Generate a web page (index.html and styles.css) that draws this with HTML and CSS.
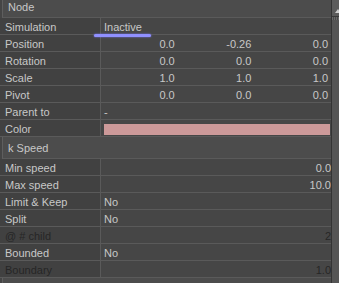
FILE: index.html
```html
<!DOCTYPE html>
<html lang="en">
<head>
  <meta charset="UTF-8">
  <title>Properties</title>
  <link rel="stylesheet" href="styles.css">
</head>
<body>
  <div class="panel">
    <div class="props">
      <div class="section first">Node</div>

      <div class="row"><div class="label">Simulation</div><div class="value">Inactive</div></div>
      <div class="row"><div class="label">Position</div><div class="value vec"><span>0.0</span><span>-0.26</span><span>0.0</span></div></div>
      <div class="row"><div class="label">Rotation</div><div class="value vec"><span>0.0</span><span>0.0</span><span>0.0</span></div></div>
      <div class="row"><div class="label">Scale</div><div class="value vec"><span>1.0</span><span>1.0</span><span>1.0</span></div></div>
      <div class="row"><div class="label">Pivot</div><div class="value vec"><span>0.0</span><span>0.0</span><span>0.0</span></div></div>
      <div class="row"><div class="label">Parent to</div><div class="value">-</div></div>
      <div class="row"><div class="label">Color</div><div class="value"><div class="swatch"></div></div></div>

      <div class="section">k Speed</div>

      <div class="row"><div class="label">Min speed</div><div class="value num">0.0</div></div>
      <div class="row"><div class="label">Max speed</div><div class="value num">10.0</div></div>
      <div class="row"><div class="label">Limit &amp; Keep</div><div class="value">No</div></div>
      <div class="row"><div class="label">Split</div><div class="value">No</div></div>
      <div class="row disabled"><div class="label">@ # child</div><div class="value num">2</div></div>
      <div class="row"><div class="label">Bounded</div><div class="value">No</div></div>
      <div class="row disabled"><div class="label">Boundary</div><div class="value num">1.0</div></div>

      <!-- next section, scrolled out of view -->
      <div class="section"></div>
    </div>

    <!-- scrollbar -->
    <div class="scrollbar">
      <div class="scroll-up"><div class="tri"></div></div>
      <div class="scroll-dither"></div>
    </div>

    <!-- focus glow under the Simulation value -->
    <div class="focus-glow"></div>
  </div>
</body>
</html>
```

FILE: styles.css
```css
* {
  margin: 0;
  padding: 0;
  box-sizing: border-box;
}

body {
  background-color: #444;
  font-family: "Liberation Sans", Arial, sans-serif;
  font-size: 11px;
  color: #c8c8c8;
}

.panel {
  position: relative;
  display: flex;
  width: 339px;
  height: 283px;
  overflow: hidden;
  background-color: #454545;
}

.props {
  flex: 1;
  display: flex;
  flex-direction: column;
}

.section {
  flex: none;
  height: 22px;
  margin-left: 2px;
  padding-left: 5px;
  line-height: 22px;
  background-color: #4c4c4c;
  border-left: 1px solid #5e5e5e;
  border-bottom: 1px solid #5a5a5a;
}

.section.first {
  margin-top: -4px;
}

.row {
  flex: none;
  display: grid;
  grid-template-columns: 101px 1fr;
  height: 17px;
  border-bottom: 1px solid #5a5a5a;
}

.label,
.value {
  height: 16px;
  line-height: 18px;
  overflow: hidden;
  white-space: nowrap;
}

.label {
  padding-left: 5px;
  background-color: #414141;
  border-right: 1px solid #5a5a5a;
}

.value {
  padding-left: 3px;
  background-color: #464646;
}

.value.num {
  text-align: right;
  padding-right: 0;
}

.vec {
  display: flex;
  padding-left: 0;
}

.vec span {
  flex: 1;
  text-align: right;
  padding-right: 3px;
}

.swatch {
  margin-top: 4px;
  margin-right: 1px;
  height: 11px;
  background-color: #cc9999;
}

.disabled .label,
.disabled .value {
  color: #262626;
}

/* Scrollbar */
.scrollbar {
  flex: none;
  width: 8px;
  background-color: #555;
  border-left: 1px solid #343434;
}

.scroll-up {
  position: relative;
  height: 17px;
  background-color: #5c5c5c;
  border-bottom: 1px solid #3a3a3a;
}

.tri {
  position: absolute;
  left: 3px;
  top: 9px;
  width: 0;
  height: 0;
  border-left: 3px solid transparent;
  border-right: 3px solid transparent;
  border-bottom: 4px solid #cfcfcf;
}

.scroll-dither {
  height: 3px;
  background-image: repeating-linear-gradient(90deg, #6a6a6a 0 1px, #4a4a4a 1px 2px);
}

.focus-glow {
  position: absolute;
  left: 94px;
  top: 34px;
  width: 57px;
  height: 3px;
  border-radius: 2px;
  background-color: #9090ff;
  box-shadow: 0 0 2px #7a7aff;
}
```
